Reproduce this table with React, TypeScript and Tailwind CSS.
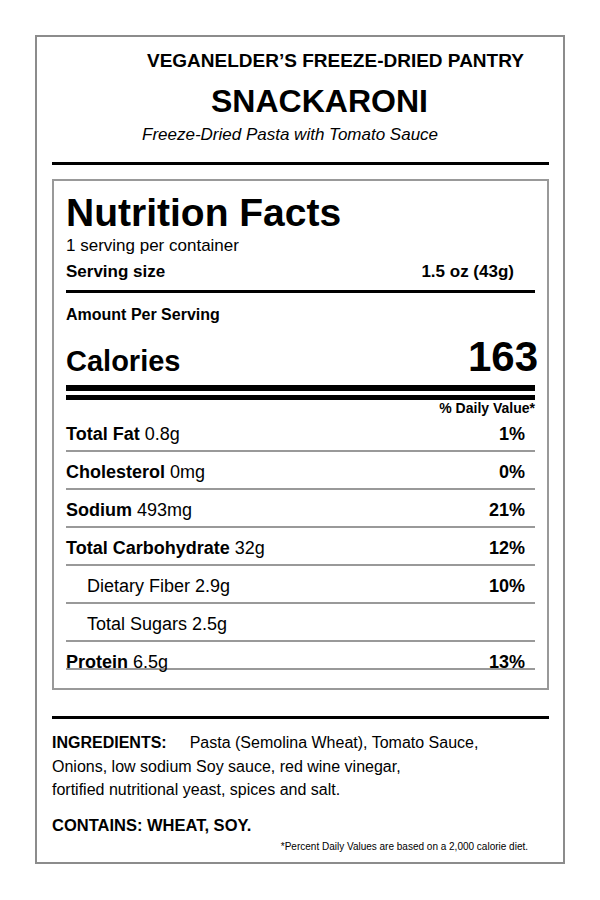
import React from 'react'

const font = { fontFamily: '"Liberation Sans", Arial, Helvetica, sans-serif' }

type Row = {
  label: string
  amount: string
  dv?: string
  indent?: boolean
}

const rows: Row[] = [
  { label: 'Total Fat', amount: '0.8g', dv: '1%' },
  { label: 'Cholesterol', amount: '0mg', dv: '0%' },
  { label: 'Sodium', amount: '493mg', dv: '21%' },
  { label: 'Total Carbohydrate', amount: '32g', dv: '12%' },
  { label: 'Dietary Fiber', amount: '2.9g', dv: '10%', indent: true },
  { label: 'Total Sugars', amount: '2.5g', indent: true },
]

function NutrientRow({ row }: { row: Row }) {
  return (
    <div className="flex h-[38px] items-start justify-between border-b-2 border-[#999] pt-[10px] text-[18px] leading-[20px]">
      <span className={row.indent ? 'pl-[21px]' : ''}>
        {row.indent ? (
          `${row.label} ${row.amount}`
        ) : (
          <>
            <b>{row.label}</b> {row.amount}
          </>
        )}
      </span>
      {row.dv && <b className="pr-[10px]">{row.dv}</b>}
    </div>
  )
}

export default function App() {
  return (
    <div className="h-[900px] w-[600px] bg-white px-[35px] pt-[35px] text-black" style={font}>
      <div className="h-[829px] w-[530px] border-2 border-[#8c8c8c] pl-[15px] pr-[14px]">
        {/* Header */}
        <div className="pt-[13px]">
          <div className="h-[22px] pl-[95px] text-[19px] font-bold leading-[22px]">
            VEGANELDER’S FREEZE-DRIED PANTRY
          </div>
          <div className="mt-[11px] h-[36px] pl-[159px] text-[32px] font-bold leading-[36px]">SNACKARONI</div>
          <div className="mt-[6px] h-[20px] pl-[90px] text-[17px] italic leading-[20px]">
            Freeze-Dried Pasta with Tomato Sauce
          </div>
        </div>
        <div className="mt-[17px] h-[3px] bg-black" />

        {/* Nutrition facts panel */}
        <div className="mt-[14px] h-[511px] border-2 border-[#999] px-[12px] pt-[11px]">
          <div className="h-[42px] text-[39px] font-bold leading-[42px]">Nutrition Facts</div>
          <div className="mt-[2px] h-[20px] text-[17px] leading-[20px]">1 serving per container</div>
          <div className="mt-[6px] flex h-[20px] justify-between pr-[21px] text-[17px] font-bold leading-[20px]">
            <span>Serving size</span>
            <span>1.5 oz (43g)</span>
          </div>
          <div className="mt-[8px] h-[3px] bg-black" />
          <div className="mt-[13px] h-[18px] text-[16px] font-bold leading-[18px]">Amount Per Serving</div>
          <div className="flex h-[58px] items-end justify-between font-bold">
            <span className="text-[29px] leading-[42px]">Calories</span>
            <span className="-mr-[3px] text-[42px] leading-[50px]">163</span>
          </div>
          <div className="mt-[3px] h-[6px] bg-black" />
          <div className="mt-[4px] h-[5px] bg-black" />
          <div className="flex h-[14px] justify-end text-[14px] font-bold leading-[16px]">% Daily Value*</div>
          {rows.map((r) => (
            <NutrientRow key={r.label} row={r} />
          ))}
          <div className="flex h-[28px] items-start justify-between border-b-2 border-[#999] pt-[10px] text-[18px] leading-[20px]">
            <span>
              <b>Protein</b> 6.5g
            </span>
            <b className="pr-[10px]">13%</b>
          </div>
        </div>

        {/* Ingredients */}
        <div className="mt-[26px] h-[3px] bg-black" />
        <div className="mt-[12px] text-[16px] leading-[23.5px]">
          <p>
            <b>INGREDIENTS:</b>
            <span className="pl-[23px]">Pasta (Semolina Wheat), Tomato Sauce,</span>
          </p>
          <p>Onions, low sodium Soy sauce, red wine vinegar,</p>
          <p>fortified nutritional yeast, spices and salt.</p>
        </div>
        <p className="mt-[13px] text-[16.5px] font-bold leading-[20px]">CONTAINS: WHEAT, SOY.</p>
        <p className="mt-[6px] pr-[21px] text-right text-[10px] leading-[12px]">
          *Percent Daily Values are based on a 2,000 calorie diet.
        </p>
      </div>
    </div>
  )
}
